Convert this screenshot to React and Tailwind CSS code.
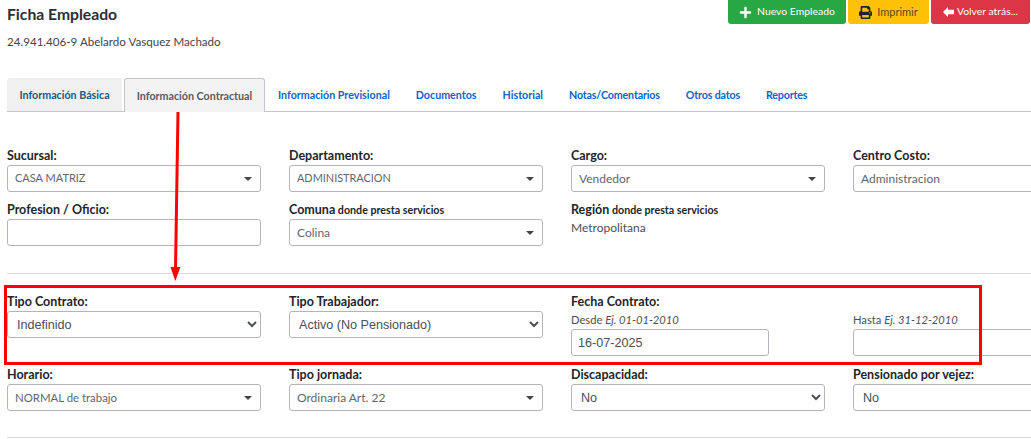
import { useState } from 'react';
import { FaPlus, FaPrint } from 'react-icons/fa';

const tabs = [
  { name: 'Información Previsional' },
  { name: 'Documentos' },
  { name: 'Historial' },
  { name: 'Notas/Comentarios', tight: true },
  { name: 'Otros datos', tight: true },
  { name: 'Reportes', tight: true },
];

function Label({ children, sub }) {
  return (
    <div className="h-[15px] text-[12.5px] leading-[15px] font-bold text-[#212529] whitespace-nowrap">
      {children}
      {sub && <span className="text-[10.7px]"> {sub}</span>}
    </div>
  );
}

// select2 style box with the small triangle
function Combo({ value, caret = true, size = 'text-[12px]' }) {
  return (
    <div className={`mt-[2px] h-[27px] flex items-center justify-between rounded-[3px] border border-[#b4b4bc] bg-white pl-[7px] pr-[8px] text-[#5f6670] ${size}`}>
      <span className="whitespace-nowrap">{value}</span>
      {caret && <span className="w-0 h-0 border-x-[4px] border-t-[4px] border-x-transparent border-t-[#444]" />}
    </div>
  );
}

function NativeSelect({ value }) {
  return (
    <select
      defaultValue={value}
      className="mt-[2px] block w-full h-[27px] rounded-[3px] border border-[#b4b4bc] bg-white pl-[5px] text-[12.6px] text-[#495057] font-['Liberation_Sans',sans-serif]"
    >
      <option>{value}</option>
    </select>
  );
}

function TextBox({ value = '', className = '' }) {
  const [v, setV] = useState(value);
  return (
    <input
      value={v}
      onChange={e => setV(e.target.value)}
      className={`block h-[27px] rounded-[3px] border border-[#b4b4bc] bg-white px-[6px] text-[12.6px] text-[#495057] font-['Liberation_Sans',sans-serif] ${className}`}
    />
  );
}

export default function App() {
  return (
    <div className="relative w-[1031px] h-[439px] overflow-hidden bg-white font-['Lato',sans-serif] text-[#212529]">
      {/* Header */}
      <div className="flex justify-between pl-[7px] pr-px">
        <div>
          <h1 className="mt-[5px] text-[15.7px] leading-[18px] font-bold text-[#2b2f33]">Ficha Empleado</h1>
          <p className="mt-[11px] text-[11.6px] leading-[15px] text-[#3f454b]">24.941.406-9 Abelardo Vasquez Machado</p>
        </div>
        <div className="flex gap-[2px] h-6 text-[10.4px]">
          <button className="w-[118px] flex items-center justify-center gap-[5px] rounded-b-[3px] bg-[#28a745] text-white">
            <FaPlus className="text-[13px]" /> Nuevo Empleado
          </button>
          <button className="w-[81px] flex items-center justify-center gap-[5px] rounded-b-[3px] bg-[#ffc107] text-[11px] text-[#5b4a10]">
            <FaPrint className="text-[13px] text-[#212529]" /> Imprimir
          </button>
          <button className="w-[99px] flex items-center justify-center gap-[3px] rounded-b-[3px] bg-[#dc3545] text-white">
            <svg width="11" height="10" viewBox="0 0 11 10" fill="currentColor"><path d="M0 5 L5 0 V2.8 H11 V7.2 H5 V10 Z" /></svg>
            Volver atrás...
          </button>
        </div>
      </div>

      {/* Tabs */}
      <div className="mt-[29px] ml-[7px] flex items-end h-[34px] border-b border-[#c4c4d2] text-[10.7px] font-bold">
        <div className="w-[115px] h-[33px] pt-[2px] flex items-center justify-center rounded-t-[3px] bg-[#f0f0f0] text-[#0f5c85]">Información Básica</div>
        <div className="relative top-px ml-[2px] w-[141px] h-[34px] pt-px flex items-center justify-center rounded-t-[3px] border border-b-0 border-[#c4c4d2] bg-[#f3f3f3] text-[#555b61]">Información Contractual</div>
        <div className="flex h-[33px] pt-[2px] items-center gap-[26px] pl-[13px] text-[#0b63ce]">
          {tabs.map(t => (
            <span key={t.name} className={t.tight ? 'whitespace-nowrap tracking-[-0.17px]' : 'whitespace-nowrap'}>{t.name}</span>
          ))}
        </div>
      </div>

      {/* Fields */}
      <div className="w-[1100px] pl-[7px]">
        <div className="mt-[36px] grid grid-cols-[254px_254px_254px_254px] gap-x-[28px] gap-y-[10px]">
          <div><Label>Sucursal:</Label><Combo value="CASA MATRIZ" size="text-[11px]" /></div>
          <div><Label>Departamento:</Label><Combo value="ADMINISTRACION" size="text-[10.9px]" /></div>
          <div><Label>Cargo:</Label><Combo value="Vendedor" /></div>
          <div><Label>Centro Costo:</Label><Combo value="Administracion" caret={false} /></div>
          <div><Label>Profesion / Oficio:</Label><TextBox className="mt-[2px] w-full" /></div>
          <div><Label sub="donde presta servicios">Comuna</Label><Combo value="Colina" /></div>
          <div>
            <Label sub="donde presta servicios">Región</Label>
            <p className="mt-[3px] text-[12px] leading-[15px] text-[#4a5058]">Metropolitana</p>
          </div>
        </div>

        <hr className="mt-[27px] w-[1024px] border-[#d9d9d9]" />

        <div className="mt-[20px] grid grid-cols-[254px_254px_254px_254px] gap-x-[28px]">
          <div><Label>Tipo Contrato:</Label><NativeSelect value="Indefinido" /></div>
          <div><Label>Tipo Trabajador:</Label><NativeSelect value="Activo (No Pensionado)" /></div>
          <div>
            <Label>Fecha Contrato:</Label>
            <div className="mt-[3px] h-[15px] text-[11.2px] leading-[15px] text-[#4a5058] whitespace-nowrap">Desde <em>Ej. 01-01-2010</em></div>
            <TextBox value="16-07-2025" className="mt-[2px] w-[198px]" />
          </div>
          <div>
            <div className="mt-[18px] h-[15px] text-[11.2px] leading-[15px] text-[#4a5058] whitespace-nowrap">Hasta <em>Ej. 31-12-2010</em></div>
            <TextBox className="mt-[2px] w-full" />
          </div>
        </div>

        <div className="mt-[11px] grid grid-cols-[254px_254px_254px_254px] gap-x-[28px]">
          <div><Label>Horario:</Label><Combo value="NORMAL de trabajo" size="text-[11.4px]" /></div>
          <div><Label>Tipo jornada:</Label><Combo value="Ordinaria Art. 22" /></div>
          <div><Label>Discapacidad:</Label><NativeSelect value="No" /></div>
          <div><Label>Pensionado por vejez:</Label><NativeSelect value="No" /></div>
        </div>

        <hr className="mt-[26px] w-[1024px] border-[#d9d9d9]" />
      </div>

      {/* Red annotation drawn over the page */}
      <div className="absolute left-[4px] top-[285px] w-[978px] h-[80px] border-[3px] border-[#ff0000] pointer-events-none" />
      <svg className="absolute left-[165px] top-[110px] pointer-events-none" width="24" height="172" viewBox="0 0 24 172">
        <path d="M13 2 L10.5 160" stroke="#ff0000" strokeWidth="3" fill="none" />
        <path d="M5.5 157 L15.5 157 L10.3 171 Z" fill="#ff0000" />
      </svg>
    </div>
  );
}
